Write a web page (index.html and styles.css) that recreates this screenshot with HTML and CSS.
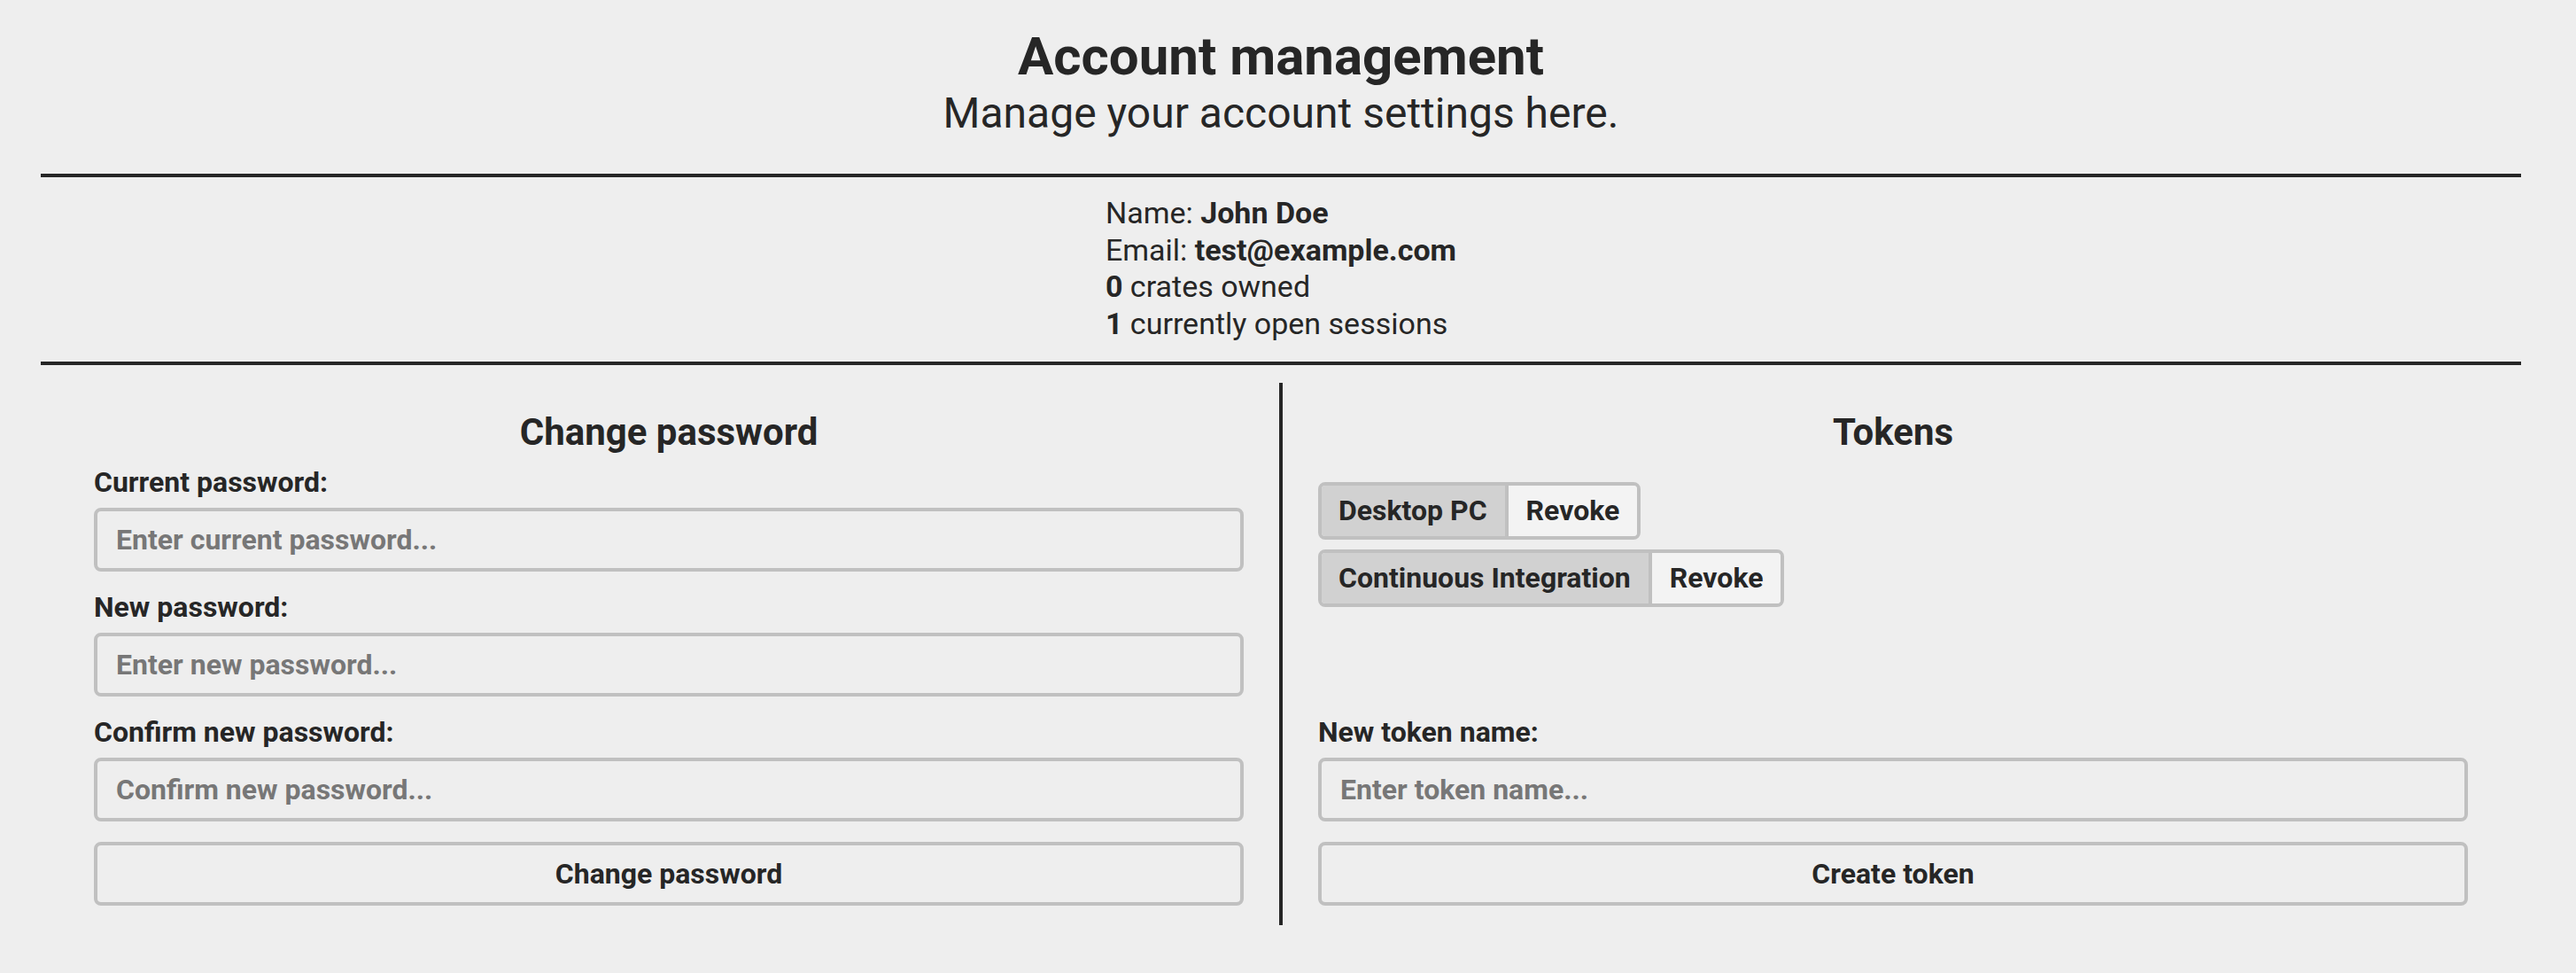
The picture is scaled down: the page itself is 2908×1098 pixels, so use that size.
FILE: index.html
```html
<!DOCTYPE html>
<html lang="en">
<head>
<meta charset="utf-8">
<title>Account management</title>
<link rel="stylesheet" href="styles.css">
</head>
<body>
<div class="page">
  <header class="page-header">
    <h1 class="title">Account management</h1>
    <p class="subtitle">Manage your account settings here.</p>
  </header>
  <hr class="rule rule-top">
  <section class="info">
    <div class="info-list">
      <div class="info-line">Name: <b>John Doe</b></div>
      <div class="info-line">Email: <b>test@example.com</b></div>
      <div class="info-line"><b>0</b> crates owned</div>
      <div class="info-line"><b>1</b> currently open sessions</div>
    </div>
  </section>
  <hr class="rule">
  <main class="columns">
    <section class="column">
      <h2 class="col-title">Change password</h2>
      <form class="form">
        <label class="field-label" for="cur">Current password:</label>
        <input class="field-input" id="cur" type="password" placeholder="Enter current password...">
        <label class="field-label" for="new">New password:</label>
        <input class="field-input" id="new" type="password" placeholder="Enter new password...">
        <label class="field-label" for="conf">Confirm new password:</label>
        <input class="field-input" id="conf" type="password" placeholder="Confirm new password...">
        <button class="btn" type="button">Change password</button>
      </form>
    </section>
    <div class="divider"></div>
    <section class="column">
      <h2 class="col-title">Tokens</h2>
      <div class="tokens">
        <div class="token"><span class="token-name">Desktop PC</span><button class="token-revoke" type="button">Revoke</button></div>
        <div class="token"><span class="token-name">Continuous Integration</span><button class="token-revoke" type="button">Revoke</button></div>
      </div>
      <form class="form form-bottom">
        <label class="field-label" for="tok">New token name:</label>
        <input class="field-input" id="tok" type="text" placeholder="Enter token name...">
        <button class="btn" type="button">Create token</button>
      </form>
    </section>
  </main>
</div>
</body>
</html>
```

FILE: styles.css
```css
html, body {
  margin: 0;
  padding: 0;
  background: #eeeeee;
}

body {
  font-family: Roboto, "Noto Sans", sans-serif;
  color: #262626;
}

.page {
  margin: 0 62px 0 46px;
}

.page-header {
  padding-top: 29px;
  text-align: center;
}

.title {
  margin: 0;
  font-size: 60px;
  line-height: 70px;
  font-weight: 700;
}

.subtitle {
  margin: 0;
  font-size: 48px;
  line-height: 58px;
  font-weight: 400;
}

.rule {
  display: block;
  height: 4px;
  border: none;
  margin: 0;
  background: #262626;
}

.rule-top {
  margin-top: 39px;
}

.info {
  display: flex;
  justify-content: center;
  padding: 20px 0 21px;
}

.info-list {
  font-size: 34px;
  line-height: 41.7px;
}

.info-list b {
  font-weight: 700;
}

.columns {
  display: grid;
  grid-template-columns: 1fr 4px 1fr;
  column-gap: 40px;
  padding: 0 60px;
  margin-top: 20px;
}

.divider {
  background: #262626;
}

.column {
  display: flex;
  flex-direction: column;
  padding: 31px 0 22px;
}

.col-title {
  margin: 0;
  text-align: center;
  font-size: 42px;
  line-height: 50px;
  font-weight: 700;
}

.form {
  display: flex;
  flex-direction: column;
  margin: 12px 0 0;
}

.form-bottom {
  margin-top: auto;
}

.field-label {
  font-size: 32px;
  line-height: 38px;
  font-weight: 700;
  margin-bottom: 10px;
}

.field-input {
  box-sizing: border-box;
  height: 72px;
  width: 100%;
  margin: 0 0 21px;
  padding: 0 21px;
  border: 4px solid #c0c0c0;
  border-radius: 8px;
  background: #eeeeee;
  font-family: Roboto, "Noto Sans", sans-serif;
  font-size: 32px;
  font-weight: 700;
  color: #262626;
  outline: none;
}

.field-input::placeholder {
  color: #777777;
  opacity: 1;
}

.btn {
  box-sizing: border-box;
  height: 72px;
  width: 100%;
  margin-top: 2px;
  border: 4px solid #c0c0c0;
  border-radius: 8px;
  background: #eeeeee;
  font-family: Roboto, "Noto Sans", sans-serif;
  font-size: 32px;
  font-weight: 700;
  color: #262626;
  padding: 0;
}

.tokens {
  display: flex;
  flex-direction: column;
  align-items: flex-start;
  gap: 11px;
  margin-top: 31px;
}

.token {
  display: inline-flex;
  box-sizing: border-box;
  height: 65px;
  border: 4px solid #c0c0c0;
  border-radius: 8px;
  overflow: hidden;
  font-size: 32px;
  font-weight: 700;
  line-height: 38px;
}

.token-name {
  display: flex;
  align-items: center;
  padding: 0 20px 0 19px;
  background: #d1d1d1;
}

.token-revoke {
  display: flex;
  align-items: center;
  padding: 0 20px;
  border: none;
  border-left: 4px solid #c0c0c0;
  background: #f3f3f3;
  font-family: Roboto, "Noto Sans", sans-serif;
  font-size: 32px;
  font-weight: 700;
  color: #262626;
}
```
